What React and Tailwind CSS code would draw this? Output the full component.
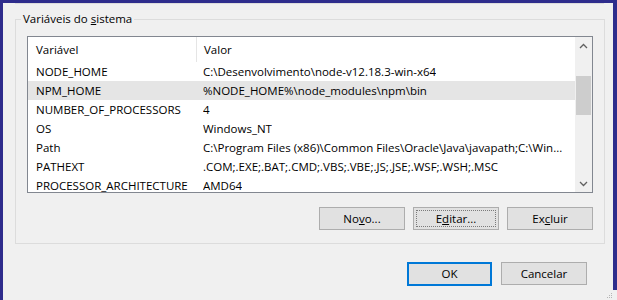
const rows = [
  ['NODE_HOME', 'C:\\Desenvolvimento\\node-v12.18.3-win-x64'],
  ['NPM_HOME', '%NODE_HOME%\\node_modules\\npm\\bin'],
  ['NUMBER_OF_PROCESSORS', '4'],
  ['OS', 'Windows_NT'],
  ['Path', 'C:\\Program Files (x86)\\Common Files\\Oracle\\Java\\javapath;C:\\Win...'],
  ['PATHEXT', '.COM;.EXE;.BAT;.CMD;.VBS;.VBE;.JS;.JSE;.WSF;.WSH;.MSC'],
  ['PROCESSOR_ARCHITECTURE', 'AMD64'],
];

function Chevron({ up }) {
  return (
    <svg width="9" height="6" viewBox="0 0 9 6" className="text-[#606060]">
      <path d={up ? 'M1 5 L4.5 1.5 L8 5' : 'M1 1 L4.5 4.5 L8 1'} fill="none" stroke="currentColor" strokeWidth="1.3" />
    </svg>
  );
}

function Btn({ children, wide = 'w-[86px]', primary, focus }) {
  return (
    <button
      className={
        primary
          ? `${wide} h-[24px] border-2 border-[#0078d7] bg-[#e1e1e1] text-[11.5px] leading-none text-black`
          : `${wide} h-[23px] border border-[#adadad] bg-[#e1e1e1] p-[2px] text-[11.5px] leading-none text-black`
      }
    >
      {focus ? (
        <span className="flex h-full w-full items-center justify-center border border-dotted border-[#7a7a7a]">{children}</span>
      ) : (
        children
      )}
    </button>
  );
}

export default function App() {
  return (
    <div
      className="relative flex h-[300px] w-[617px] overflow-hidden bg-[#f0f0f0] text-black"
      style={{ fontFamily: '"Segoe UI", "Open Sans", sans-serif' }}
    >
      <div className="w-[3px] bg-[#2e2c8c]" />

      <div className="flex flex-1 flex-col">
        <div className="h-[3px] bg-[#2e2c8c]" />
        <div className="ml-[12px] mr-[9px] h-[1px] border-x border-b border-[#dcdcdc]" />

        <fieldset className="ml-[12px] mr-[8px] mt-[7px] border border-[#dcdcdc] pb-[13px]">
          <legend className="ml-[5px] px-[2px] text-[11.5px] leading-[16px]">
            Variáveis do <u>s</u>istema
          </legend>

          <div className="px-[11px]">
            <div className="mt-[9px] flex h-[157px] border border-[#828790] bg-white">
              <div className="flex-1 overflow-hidden text-[11.5px]">
                <div className="flex h-[25px] items-center">
                  <div className="flex h-full w-[169px] items-center border-r border-[#e5e5e5] pl-[8px]">Variável</div>
                  <div className="pl-[7px]">Valor</div>
                </div>
                {rows.map(([name, value]) => (
                  <div
                    key={name}
                    className={`flex h-[19px] items-center whitespace-nowrap ${name === 'NPM_HOME' ? 'bg-[#e5e5e5]' : ''}`}
                  >
                    <div className="w-[175px] shrink-0 pl-[8px]">{name}</div>
                    <div className="overflow-hidden">{value}</div>
                  </div>
                ))}
              </div>

              <div className="flex w-[17px] flex-col bg-[#f0f0f0]">
                <div className="flex h-[17px] items-center justify-center">
                  <Chevron up />
                </div>
                <div className="flex-1 px-[1px] pt-[22px]">
                  <div className="h-[39px] bg-[#cdcdcd]" />
                </div>
                <div className="flex h-[17px] items-center justify-center">
                  <Chevron />
                </div>
              </div>
            </div>

            <div className="mt-[14px] flex justify-end gap-[8px]">
              <Btn>
                No<u>v</u>o...
              </Btn>
              <Btn focus>
                E<u>d</u>itar...
              </Btn>
              <Btn>
                Ex<u>c</u>luir
              </Btn>
            </div>
          </div>
        </fieldset>

        <div className="mt-[18px] flex justify-end gap-[9px] pr-[26px]">
          <Btn primary wide="w-[85px]">OK</Btn>
          <Btn>Cancelar</Btn>
        </div>
      </div>

      <div className="flex w-[4px] flex-col">
        <div className="h-[290px] bg-[#2e2c8c]" />
      </div>

      <div className="absolute bottom-[2px] right-[5px] grid grid-cols-3 gap-[1px]">
        <span />
        <span />
        <span className="h-[1px] w-[1px] bg-[#b5b5b5]" />
        <span />
        <span className="h-[1px] w-[1px] bg-[#b5b5b5]" />
        <span className="h-[1px] w-[1px] bg-[#b5b5b5]" />
        <span className="h-[1px] w-[1px] bg-[#b5b5b5]" />
        <span className="h-[1px] w-[1px] bg-[#b5b5b5]" />
        <span className="h-[1px] w-[1px] bg-[#b5b5b5]" />
      </div>
    </div>
  );
}
